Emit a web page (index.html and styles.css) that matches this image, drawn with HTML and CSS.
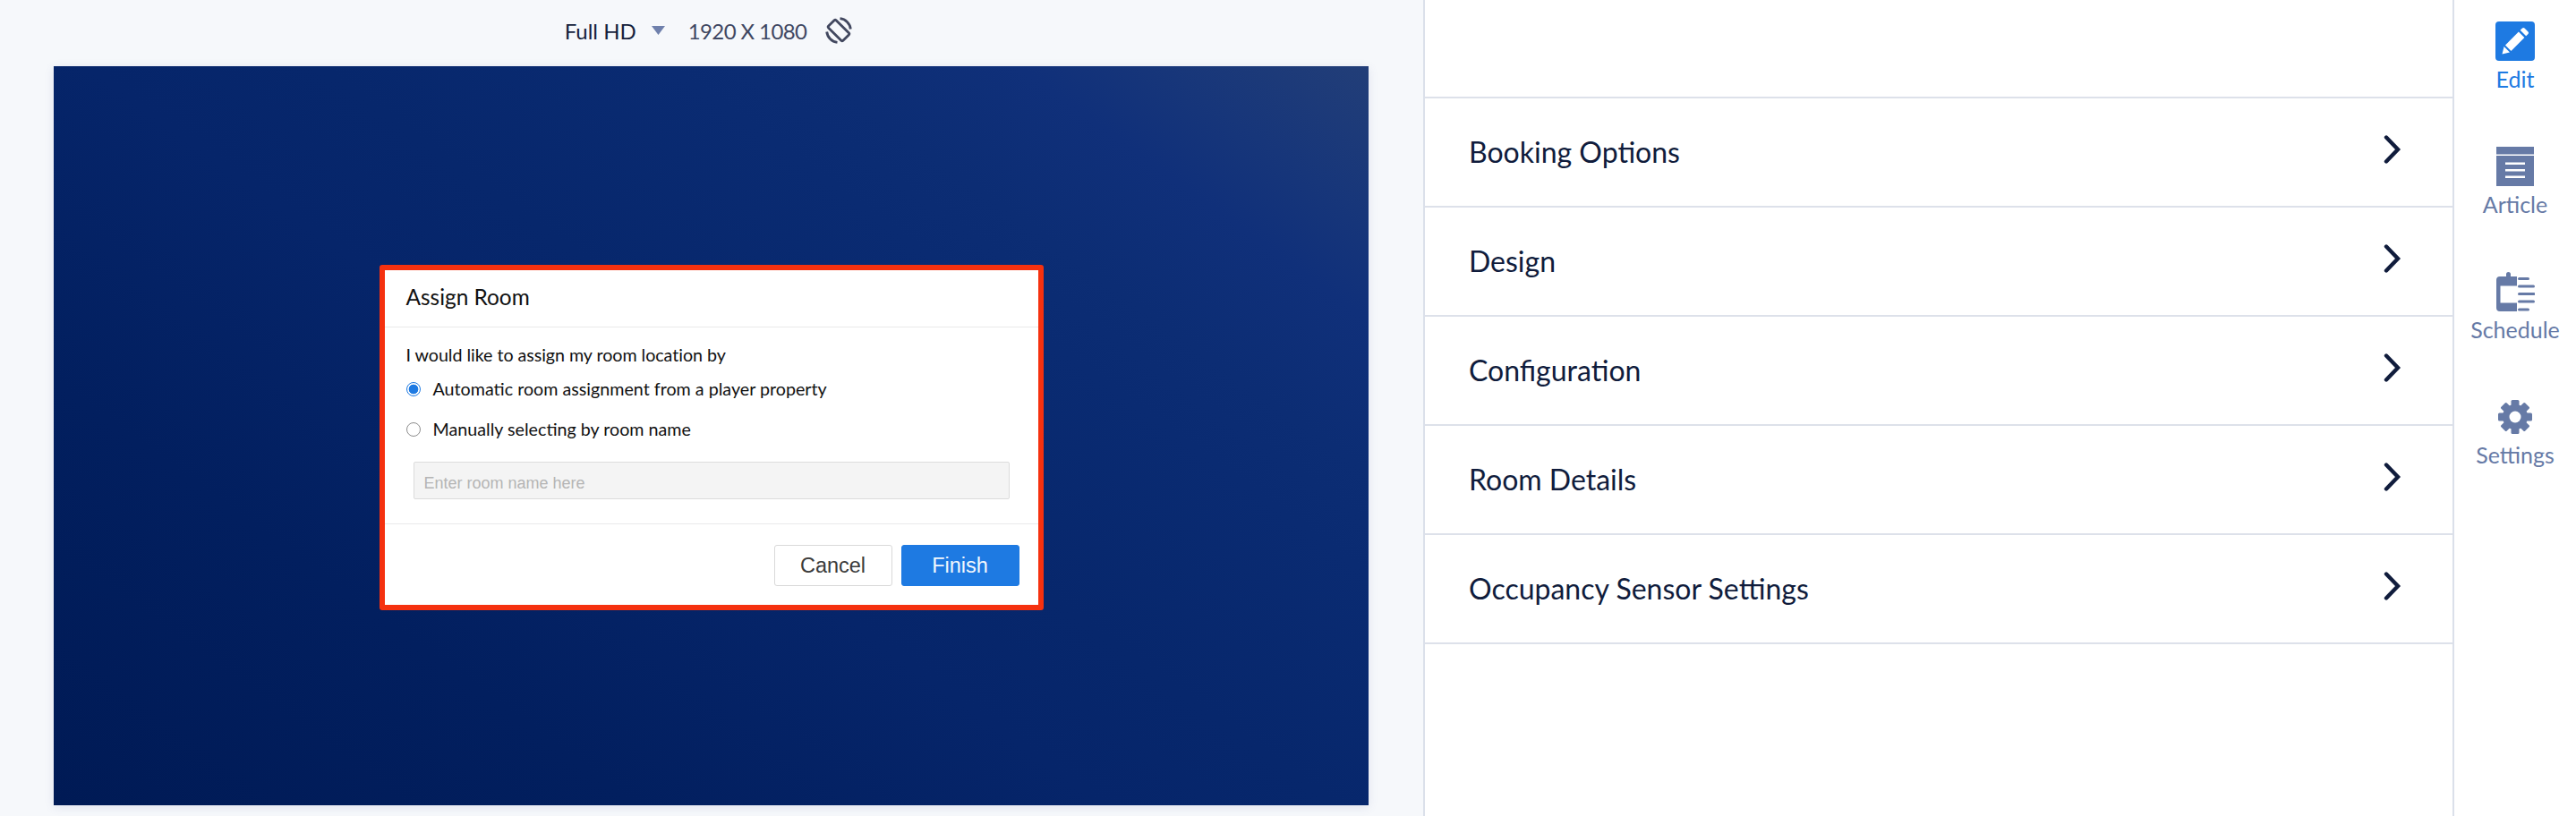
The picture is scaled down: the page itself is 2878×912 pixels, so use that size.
FILE: index.html
```html
<!DOCTYPE html>
<html lang="en">
<head>
<meta charset="utf-8">
<title>Assign Room</title>
<link rel="stylesheet" href="styles.css">
</head>
<body>
<div class="app">
  <main class="preview">
    <div class="toolbar">
      <span class="res-name">Full HD</span>
      <svg class="caret" width="15" height="10" viewBox="0 0 15 10"><path d="M0 0h15L7.500 10z" fill="#6f80ac"/></svg>
      <span class="res-size">1920 X 1080</span>
      <svg class="rotate" width="30" height="30" viewBox="0 0 30 30" fill="none" stroke="#42485f" stroke-width="2.800">
        <rect x="9" y="3.500" width="12" height="23" rx="1.500" transform="rotate(-45 15 15)"/>
        <path d="M16.500 1.700A13.400 13.400 0 0 1 28.300 13.500"/>
        <path d="M13.500 28.300A13.400 13.400 0 0 1 1.700 16.500"/>
      </svg>
    </div>
    <div class="canvas">
      <section class="dialog">
        <header class="dialog-head">Assign Room</header>
        <div class="dialog-body">
          <p class="lead">I would like to assign my room location by</p>
          <div class="option option-first"><span class="radio radio-on"></span><span>Automatic room assignment from a player property</span></div>
          <div class="option option-second"><span class="radio"></span><span>Manually selecting by room name</span></div>
          <div class="room-input">Enter room name here</div>
        </div>
        <footer class="dialog-foot">
          <button class="btn btn-cancel">Cancel</button>
          <button class="btn btn-finish">Finish</button>
        </footer>
      </section>
    </div>
  </main>
  <section class="panel">
    <div class="panel-top"></div>
    <div class="row"><span>Booking Options</span><svg class="chev" width="20" height="32" viewBox="0 0 20 32" fill="none" stroke="#101c3c" stroke-width="4.400" stroke-linecap="round"><path d="M3 2.500 16 16 3 29.500"/></svg></div>
    <div class="row"><span>Design</span><svg class="chev" width="20" height="32" viewBox="0 0 20 32" fill="none" stroke="#101c3c" stroke-width="4.400" stroke-linecap="round"><path d="M3 2.500 16 16 3 29.500"/></svg></div>
    <div class="row"><span>Configuration</span><svg class="chev" width="20" height="32" viewBox="0 0 20 32" fill="none" stroke="#101c3c" stroke-width="4.400" stroke-linecap="round"><path d="M3 2.500 16 16 3 29.500"/></svg></div>
    <div class="row"><span>Room Details</span><svg class="chev" width="20" height="32" viewBox="0 0 20 32" fill="none" stroke="#101c3c" stroke-width="4.400" stroke-linecap="round"><path d="M3 2.500 16 16 3 29.500"/></svg></div>
    <div class="row"><span>Occupancy Sensor Settings</span><svg class="chev" width="20" height="32" viewBox="0 0 20 32" fill="none" stroke="#101c3c" stroke-width="4.400" stroke-linecap="round"><path d="M3 2.500 16 16 3 29.500"/></svg></div>
  </section>
  <nav class="rail">
    <a class="rail-item rail-active">
      <svg width="44" height="44" viewBox="0 0 44 44"><rect width="44" height="44" rx="4" fill="#1e7ae2"/><path d="M30 7.500a1.800 1.800 0 0 1 2.500 0l4 4a1.800 1.800 0 0 1 0 2.500l-2.300 2.300-6.500-6.500zM25.900 11.600l6.500 6.500L17.500 33l-6.500-6.500zM9.600 28l6.400 6.400-8.500 2.100z" fill="#fff"/></svg>
      <span>Edit</span>
    </a>
    <a class="rail-item">
      <svg width="42" height="44" viewBox="0 0 42 44"><path d="M0 0h42v8.500H0zM0 10h42v34H0z" fill="#667aa6"/><path d="M10 17.500h22v2.500H10zM10 25h22v2.500H10zM10 32.500h22v2.500H10z" fill="#fff"/></svg>
      <span>Article</span>
    </a>
    <a class="rail-item">
      <svg width="44" height="44" viewBox="0 0 44 44"><path d="M9 5h3V2.500a2.500 2.500 0 0 1 5 0V5h7v10.500H5.500v19h18.500V44H5a4 4 0 0 1-4-4V9a4 4 0 0 1 4-4z" fill="#667aa6"/><path d="M26.500 7.500h10M26.500 16h16M26.500 24.500h16.500M26.500 33h16M26.500 42h10" stroke="#667aa6" stroke-width="3" stroke-linecap="round" fill="none"/></svg>
      <span>Schedule</span>
    </a>
    <a class="rail-item">
      <svg class="gear" width="38" height="38" viewBox="0 0 38 38" fill="#667aa6">
        <circle cx="19" cy="19" r="14"/>
        <rect x="14.500" y="0" width="9" height="38" rx="1.500"/>
        <rect x="14.500" y="0" width="9" height="38" rx="1.500" transform="rotate(45 19 19)"/>
        <rect x="14.500" y="0" width="9" height="38" rx="1.500" transform="rotate(90 19 19)"/>
        <rect x="14.500" y="0" width="9" height="38" rx="1.500" transform="rotate(135 19 19)"/>
        <circle cx="19" cy="19" r="6.500" fill="#fff"/>
      </svg>
      <span>Settings</span>
    </a>
  </nav>
</div>
</body>
</html>
```

FILE: styles.css
```css
* { box-sizing: border-box; }
html, body { margin: 0; height: 100%; }
body { font-family: Lato, "Noto Sans", sans-serif; background: #fff; overflow: hidden; }
.app { display: flex; width: 2878px; height: 912px; }

.preview { width: 1590px; flex: none; background: #f6f8fb; display: flex; flex-direction: column; padding: 0 61px 12px 60px; }
.toolbar { height: 74px; flex: none; display: flex; align-items: center; justify-content: center; padding: 0 6px 6px 0; font-size: 24px; }
.res-name { color: #161f3d; }
.caret { margin: 0 0 0 17px; }
.res-size { color: #3f4762; margin-left: 26px; letter-spacing: -0.6px; }
.rotate { margin-left: 21px; }

.canvas {
  flex: 1; display: flex; align-items: center; justify-content: center; padding-top: 4px;
  background: linear-gradient(36deg, #001a55 0%, #021f5f 25%, #06256a 45%, #07276c 55%, #0a2b72 70%, #0c2d74 76%, #10307a 85%, #17367a 91%, #223e78 100%);
  box-shadow: 0 2px 10px rgba(90, 100, 160, .14);
}

.dialog { width: 742px; height: 386px; background: #fff; border: 6px solid #f5310f; border-radius: 3px; display: flex; flex-direction: column; color: #111; }
.dialog-head { height: 64px; flex: none; display: flex; align-items: center; padding: 0 0 4px 24px; font-size: 24.400px; border-bottom: 1px solid #e9e9ea; }
.dialog-body { flex: 1; padding: 19px 32px 0 24px; font-size: 19.700px; }
.lead { margin: 0; line-height: 24px; letter-spacing: -0.05px; }
.option { display: flex; align-items: center; gap: 14px; line-height: 24px; }
.option-first { margin-top: 14px; }
.option-second { margin-top: 21px; }
.radio { width: 16px; height: 16px; flex: none; border-radius: 50%; border: 1.500px solid #8d8d8d; background: #fff; }
.radio-on { border-color: #1e7ae2; background: radial-gradient(circle, #1e7ae2 0 5px, #fff 5.700px); }
.room-input { height: 42px; margin: 24px 0 0 8px; padding: 6px 11px 0; display: flex; align-items: center; background: #f4f4f4; border: 1px solid #dcdcdc; border-radius: 2px; font-family: "Liberation Sans", Arial, sans-serif; font-size: 18px; color: #b5b5b5; }
.dialog-foot { height: 91px; flex: none; border-top: 1px solid #e9e9ea; display: flex; justify-content: flex-end; gap: 10px; padding: 23px 21px 0 0; }
.btn { width: 132px; height: 46px; border-radius: 3px; font-family: "Liberation Sans", Arial, sans-serif; font-size: 23.500px; padding: 0; }
.btn-cancel { background: #fff; border: 1px solid #d9d9d9; color: #3b3b3b; }
.btn-finish { background: #1e7ae2; border: 1px solid #1e7ae2; color: #f2f7fd; }

.panel { width: 1152px; flex: none; background: #fff; border-left: 2px solid #dbe0ea; border-right: 2px solid #dbe0ea; }
.panel-top { box-sizing: content-box; height: 108px; border-bottom: 2px solid #dde1ea; }
.row { height: 122px; border-bottom: 2px solid #dde1ea; display: flex; align-items: center; justify-content: space-between; padding: 0 57px 2px 49px; font-size: 32px; color: #101c3c; }
.chev { margin-top: -4px; }

.rail { flex: 1; background: #fff; display: flex; flex-direction: column; align-items: center; padding-top: 24px; }
.rail-item { height: 140px; display: flex; flex-direction: column; align-items: center; font-size: 25px; color: #667aa6; white-space: nowrap; }
.rail-item span { line-height: 30px; margin-top: 5px; }
.rail-active { color: #1e7ae2; }
.gear { margin: 3px 0; }
```
